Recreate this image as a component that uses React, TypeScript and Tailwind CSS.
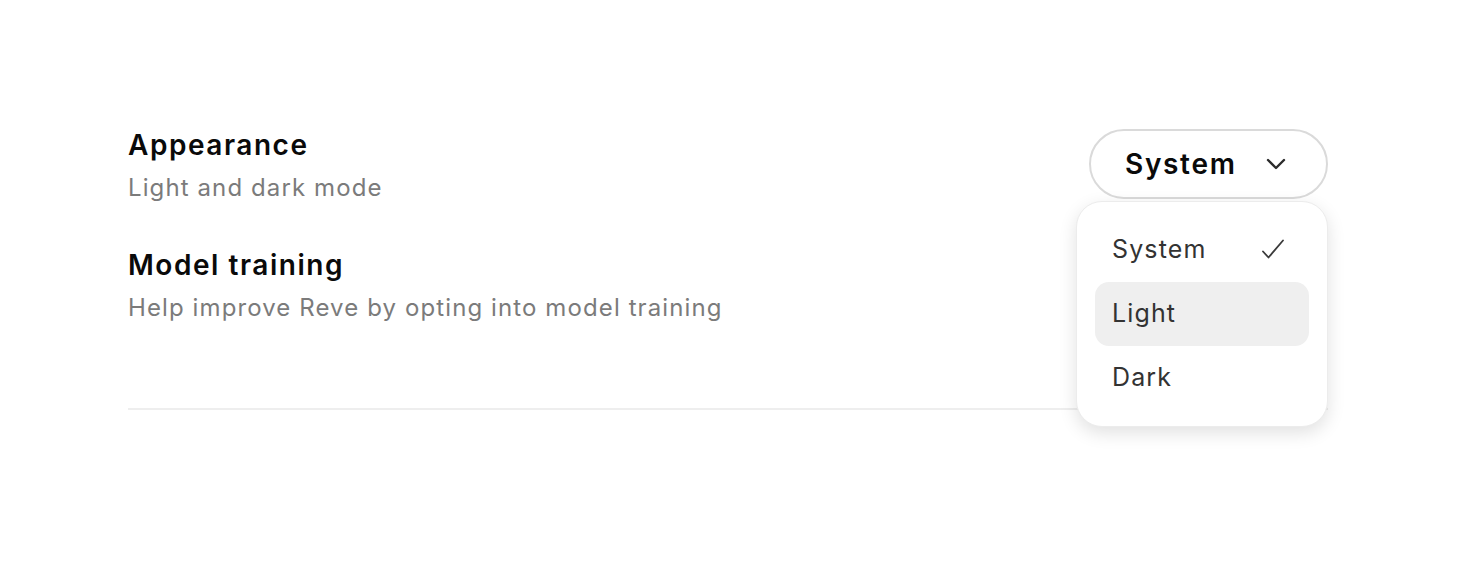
import { useState } from 'react';

const OPTIONS = ['System', 'Light', 'Dark'];

function Chevron() {
  return (
    <svg width="20" height="12" viewBox="0 0 20 12" fill="none">
      <path d="M2 2l8 8 8-8" stroke="#2b2b2b" strokeWidth="2.4" strokeLinecap="round" strokeLinejoin="round" />
    </svg>
  );
}

function CheckMark() {
  return (
    <svg width="24" height="24" viewBox="0 0 24 24" fill="none">
      <path d="M2 13.5l5.5 6L22 2.5" stroke="#3a3a3a" strokeWidth="1.8" strokeLinecap="round" strokeLinejoin="round" />
    </svg>
  );
}

function SettingRow({ title, sub }: { title: string; sub: string }) {
  return (
    <div className="flex flex-col gap-[9px]">
      <h3 className="text-[28px] leading-[36px] font-semibold tracking-[0.055em] text-[#0a0a0a]">{title}</h3>
      <p className="text-[24px] leading-[32px] tracking-[0.046em] text-[#7b7b7b]">{sub}</p>
    </div>
  );
}

export default function App() {
  const [value] = useState('System');
  const hovered = 'Light';

  return (
    <div
      className="min-h-screen bg-white pl-[128px] pr-[142px] pt-[127px]"
      style={{ fontFamily: 'Inter, "Noto Sans", sans-serif' }}
    >
      <div className="flex items-start justify-between">
        <SettingRow title="Appearance" sub="Light and dark mode" />

        <div className="relative mt-[2px]">
          <button className="flex h-[70px] w-[239px] items-center justify-between rounded-full border-2 border-[#dadada] bg-white pl-[34px] pr-[40px]">
            <span className="text-[28px] font-semibold tracking-[0.06em] text-[#0a0a0a]">{value}</span>
            <Chevron />
          </button>

          {/* open menu */}
          <div className="absolute right-0 top-[72px] z-10 w-[252px] rounded-[26px] border border-[#ececec] bg-white px-[18px] py-[16px] shadow-[0_6px_18px_rgba(0,0,0,0.12)]">
            {OPTIONS.map((o) => (
              <div
                key={o}
                className={
                  'flex h-16 items-center justify-between rounded-[14px] pl-[17px] pr-[24px] ' +
                  (o === hovered ? 'bg-[#efefef]' : '')
                }
              >
                <span className="text-[25px] tracking-[0.045em] text-[#333333]">{o}</span>
                {o === value && <CheckMark />}
              </div>
            ))}
          </div>
        </div>
      </div>

      <div className="mt-[43px]">
        <SettingRow title="Model training" sub="Help improve Reve by opting into model training" />
      </div>

      <div className="mt-[84px] h-[2px] bg-[#eeeeee]" />
    </div>
  );
}
